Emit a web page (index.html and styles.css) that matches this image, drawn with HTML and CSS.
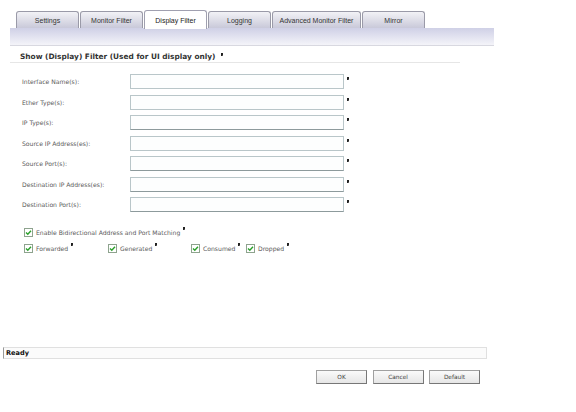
FILE: index.html
```html
<!DOCTYPE html>
<html>
<head>
<meta charset="utf-8">
<link rel="stylesheet" href="styles.css">
</head>
<body>
<div class="page">
  <div class="tabs">
    <div class="tab w64">Settings</div>
    <div class="tab w64">Monitor Filter</div>
    <div class="tab active w64">Display Filter</div>
    <div class="tab w64">Logging</div>
    <div class="tab w90">Advanced Monitor Filter</div>
    <div class="tab w64">Mirror</div>
  </div>
  <div class="bar"></div>
  <div class="heading">Show (Display) Filter (Used for UI display only) <span class="mark"></span></div>
  <div class="form">
    <div class="row"><label>Interface Name(s):</label><div class="input"></div><span class="mark"></span></div>
    <div class="row"><label>Ether Type(s):</label><div class="input"></div><span class="mark"></span></div>
    <div class="row"><label>IP Type(s):</label><div class="input dark"></div><span class="mark"></span></div>
    <div class="row"><label>Source IP Address(es):</label><div class="input"></div><span class="mark"></span></div>
    <div class="row"><label>Source Port(s):</label><div class="input dark"></div><span class="mark"></span></div>
    <div class="row"><label>Destination IP Address(es):</label><div class="input dark"></div><span class="mark"></span></div>
    <div class="row"><label>Destination Port(s):</label><div class="input dark"></div><span class="mark"></span></div>
  </div>
  <div class="checks">
    <div class="crow">
      <span class="cb"><svg width="9" height="9" viewBox="0 0 9 9"><rect x="0.5" y="0.5" width="8" height="8" fill="#fff" stroke="#8ea38e"/><path d="M2 4.5 L3.8 6.3 L7 2.8" fill="none" stroke="#2aa02a" stroke-width="1.4"/></svg></span>
      <span class="ctext">Enable Bidirectional Address and Port Matching</span><span class="mark"></span>
    </div>
    <div class="crow">
      <span class="citem c1"><span class="cb"><svg width="9" height="9" viewBox="0 0 9 9"><rect x="0.5" y="0.5" width="8" height="8" fill="#fff" stroke="#8ea38e"/><path d="M2 4.5 L3.8 6.3 L7 2.8" fill="none" stroke="#2aa02a" stroke-width="1.4"/></svg></span><span class="ctext">Forwarded</span><span class="mark"></span></span>
      <span class="citem c2"><span class="cb"><svg width="9" height="9" viewBox="0 0 9 9"><rect x="0.5" y="0.5" width="8" height="8" fill="#fff" stroke="#8ea38e"/><path d="M2 4.5 L3.8 6.3 L7 2.8" fill="none" stroke="#2aa02a" stroke-width="1.4"/></svg></span><span class="ctext">Generated</span><span class="mark"></span></span>
      <span class="citem c3"><span class="cb"><svg width="9" height="9" viewBox="0 0 9 9"><rect x="0.5" y="0.5" width="8" height="8" fill="#fff" stroke="#8ea38e"/><path d="M2 4.5 L3.8 6.3 L7 2.8" fill="none" stroke="#2aa02a" stroke-width="1.4"/></svg></span><span class="ctext">Consumed</span><span class="mark"></span></span>
      <span class="citem"><span class="cb"><svg width="9" height="9" viewBox="0 0 9 9"><rect x="0.5" y="0.5" width="8" height="8" fill="#fff" stroke="#8ea38e"/><path d="M2 4.5 L3.8 6.3 L7 2.8" fill="none" stroke="#2aa02a" stroke-width="1.4"/></svg></span><span class="ctext">Dropped</span><span class="mark"></span></span>
    </div>
  </div>
  <div class="status">Ready</div>
  <div class="buttons">
    <div class="btn">OK</div>
    <div class="btn">Cancel</div>
    <div class="btn">Default</div>
  </div>
</div>
</body>
</html>
```
FILE: styles.css
```css
* { box-sizing: border-box; }
html, body { margin: 0; padding: 0; background: #fff; }
body {
  width: 576px;
  height: 412px;
  overflow: hidden;
  font-family: "Liberation Sans", Arial, sans-serif;
  font-size: 7px;
  color: #333;
}
.page { display: flex; flex-direction: column; }

.tabs {
  display: flex;
  align-items: flex-end;
  height: 28px;
  padding-left: 16px;
}
.tab {
  height: 17px;
  border: 1px solid #9a9aa8;
  border-bottom: none;
  border-radius: 3px 3px 0 0;
  background: linear-gradient(#f2f2f6, #c9c9d9);
  display: flex;
  align-items: center;
  justify-content: center;
  color: #333;
  font-size: 7px;
  margin-right: 1px;
}
.w64 { width: 63px; }
.w90 { width: 89px; }
.tab.active {
  height: 19px;
  background: #fff;
  border-color: #a0a0b0;
  color: #222;
  margin-bottom: -1px;
  position: relative;
  z-index: 1;
}

.bar {
  margin-left: 10px;
  width: 484px;
  height: 18px;
  background: linear-gradient(#cfd0e6, #f4f4f9);
  border-bottom: 1px solid #d8d8e0;
}

.heading {
  margin-left: 20px;
  margin-top: 6px;
  height: 10px;
  line-height: 10px;
  font-family: "DejaVu Sans", Verdana, sans-serif;
  font-weight: bold;
  font-size: 7.4px;
  color: #333;
}
.heading .mark { vertical-align: top; margin-top: 1px; }

.form {
  margin-left: 10px;
  width: 450px;
  border-top: 1px solid #e6e6e6;
  padding-top: 11px;
  padding-left: 12px;
  display: flex;
  flex-direction: column;
  gap: 5.5px;
}
.row {
  display: flex;
  align-items: flex-start;
  height: 15px;
}
.row label {
  width: 108px;
  line-height: 15px;
  color: #5a5a5a;
  font-family: "DejaVu Sans", Verdana, sans-serif;
  font-size: 6.1px;
}
.input {
  width: 214px;
  height: 15px;
  border: 1px solid #b9c6c9;
  background: #fdfefe;
}
.input.dark { border-bottom-color: #8d9a9c; }
.mark {
  display: inline-block;
  width: 2px;
  height: 3px;
  background: #222;
  border-radius: 0 0 1px 0;
  margin-left: 3px;
}
.row .mark { margin-top: 3px; }

.checks {
  margin-top: 16px;
  margin-left: 24px;
  display: flex;
  flex-direction: column;
  gap: 7px;
  font-family: "DejaVu Sans", Verdana, sans-serif;
  font-size: 6.1px;
  color: #5a5a5a;
}
.crow { display: flex; align-items: center; height: 9px; }
.cb { width: 9px; height: 9px; display: inline-block; }
.cb svg { display: block; }
.ctext { margin-left: 3px; }
.crow .mark { align-self: flex-start; margin-top: -1px; }
.citem { display: flex; align-items: center; height: 9px; }
.citem .mark { align-self: flex-start; margin-top: -1px; }
.c1 { width: 84px; }
.c2 { width: 83px; }
.c3 { width: 55px; }

.status {
  margin-top: 94px;
  margin-left: 3px;
  width: 484px;
  height: 12px;
  border: 1px solid #e0e0e0;
  border-left: 1px solid #999;
  background: #fbfbfb;
  font-family: "DejaVu Sans", Verdana, sans-serif;
  font-weight: bold;
  font-size: 6.6px;
  line-height: 10px;
  padding-left: 2px;
  color: #111;
}

.buttons {
  display: flex;
  gap: 5.5px;
  margin-top: 11px;
  margin-left: 316px;
}
.btn {
  width: 51px;
  height: 14px;
  border: 1px solid #a0a0a0;
  border-right-color: #777;
  border-bottom-color: #777;
  background: linear-gradient(#fafafa, #e6e6e6);
  display: flex;
  align-items: center;
  justify-content: center;
  font-family: "DejaVu Sans", Verdana, sans-serif;
  font-size: 5.8px;
  color: #444;
}
```
